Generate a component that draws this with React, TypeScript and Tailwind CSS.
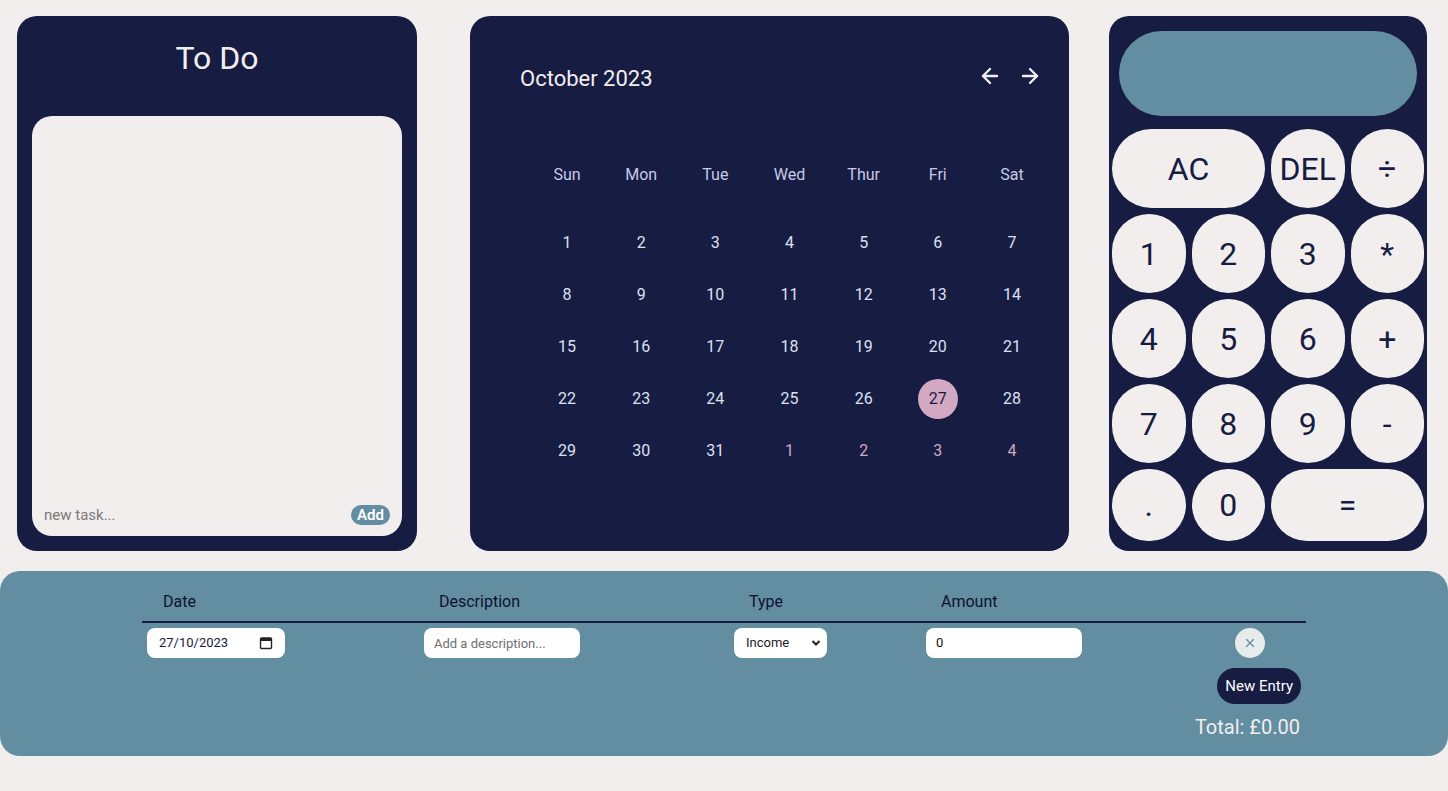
import { FiArrowLeft, FiArrowRight, FiX } from "react-icons/fi";

const days = ["Sun", "Mon", "Tue", "Wed", "Thur", "Fri", "Sat"];

const weeks: { n: number; next?: boolean }[][] = [
  [1, 2, 3, 4, 5, 6, 7].map((n) => ({ n })),
  [8, 9, 10, 11, 12, 13, 14].map((n) => ({ n })),
  [15, 16, 17, 18, 19, 20, 21].map((n) => ({ n })),
  [22, 23, 24, 25, 26, 27, 28].map((n) => ({ n })),
  [
    { n: 29 },
    { n: 30 },
    { n: 31 },
    { n: 1, next: true },
    { n: 2, next: true },
    { n: 3, next: true },
    { n: 4, next: true },
  ],
];

const keys = [
  { label: "AC", cls: "col-span-2" },
  { label: "DEL", cls: "" },
  { label: "÷", cls: "text-[26px]" },
  { label: "1", cls: "" },
  { label: "2", cls: "" },
  { label: "3", cls: "" },
  { label: "*", cls: "text-[22px]" },
  { label: "4", cls: "" },
  { label: "5", cls: "" },
  { label: "6", cls: "" },
  { label: "+", cls: "text-[26px]" },
  { label: "7", cls: "" },
  { label: "8", cls: "" },
  { label: "9", cls: "" },
  { label: "-", cls: "text-[26px]" },
  { label: ".", cls: "text-[26px]" },
  { label: "0", cls: "" },
  { label: "=", cls: "col-span-2 text-[26px]" },
];

const App = () => {
  return (
    <div
      className="min-h-[791px] w-full bg-[#f3eeee] pt-[16px]"
      style={{ fontFamily: "Roboto, 'Liberation Sans', sans-serif" }}
    >
      {/* Top Row */}
      <div className="flex h-[535px] px-[17px] gap-[53px]">
        {/* To Do */}
        <div className="w-[400px] rounded-[20px] bg-[#161c42] flex flex-col px-[15px] pb-[15px]">
          <h1 className="text-center text-[32px] text-[#f3eeee] pt-[21px] h-[100px] leading-[42px]">
            To Do
          </h1>
          <div className="flex-1 rounded-[20px] bg-[#f3eeee] flex flex-col justify-end px-[12px] pb-[10px]">
            <div className="flex items-center justify-between">
              <input
                className="bg-transparent outline-none text-[15px] text-[#6b6b6b] placeholder:text-[#7a7a7a] w-[250px]"
                placeholder="new task..."
              />
              <button className="rounded-full bg-[#638da0] text-white font-semibold text-[15px] px-[6px] h-[20px] leading-[20px]">
                Add
              </button>
            </div>
          </div>
        </div>

        {/* Calendar */}
        <div className="w-[599px] rounded-[20px] bg-[#161c42] flex flex-col">
          <div className="flex justify-between items-center pl-[50px] pr-[27px] pt-[49px]">
            <h2 className="text-[22px] text-[#f3eeee] leading-[28px]">October 2023</h2>
            <div className="flex gap-[16px] text-[#f3eeee] -mt-[7px]">
              <FiArrowLeft size={24} strokeWidth={2.4} />
              <FiArrowRight size={24} strokeWidth={2.4} />
            </div>
          </div>
          <div className="grid grid-cols-7 w-[519px] ml-[60px] mt-[72px] text-[16px] text-center">
            {days.map((d) => (
              <div key={d} className="text-[#c7cbe6] h-[20px] leading-[20px]">
                {d}
              </div>
            ))}
          </div>
          <div className="flex flex-col w-[519px] ml-[60px] mt-[32px]">
            {weeks.map((w, i) => (
              <div key={i} className="grid grid-cols-7 h-[52px] items-center text-[16px]">
                {w.map((d, j) => (
                  <div key={j} className="flex justify-center">
                    {d.n === 27 && !d.next ? (
                      <span className="w-[40px] h-[40px] rounded-full bg-[#d3a8c2] text-[#161c42] flex items-center justify-center">
                        {d.n}
                      </span>
                    ) : (
                      <span className={d.next ? "text-[#d3a8c2]" : "text-[#dde0f2]"}>{d.n}</span>
                    )}
                  </div>
                ))}
              </div>
            ))}
          </div>
        </div>

        {/* Calculator */}
        <div className="w-[318px] ml-[-13px] rounded-[20px] bg-[#161c42] flex flex-col px-[3px] pt-[15px]">
          <div className="mx-[7px] h-[85px] rounded-full bg-[#638da0]"></div>
          <div className="grid grid-cols-4 gap-[6px] mt-[13px] grid-rows-[79px_79px_79px_79px_72px]">
            {keys.map((k) => (
              <button
                key={k.label}
                className={`rounded-full bg-[#f3eeee] text-[#161c42] text-[32px] flex items-center justify-center ${k.cls}`}
              >
                {k.label}
              </button>
            ))}
          </div>
        </div>
      </div>

      {/* Budget Table */}
      <div className="mt-[20px] h-[185px] rounded-[20px] bg-[#638da0] pt-[20px]">
        <div className="w-[1164px] ml-[142px] flex flex-col">
          {/* Headers */}
          <div className="grid grid-cols-[277px_310px_192px_310px_75px] text-[16px] text-[#0e1230] border-b-2 border-[#161c42] h-[32px]">
            <div className="pl-[21px] leading-[22px]">Date</div>
            <div className="pl-[20px] leading-[22px]">Description</div>
            <div className="pl-[20px] leading-[22px]">Type</div>
            <div className="pl-[20px] leading-[22px]">Amount</div>
            <div></div>
          </div>
          {/* Row */}
          <div className="grid grid-cols-[277px_310px_192px_174px_211px] pt-[5px] text-[13px]">
            <div className="pl-[5px]">
              <div className="w-[138px] h-[30px] bg-white rounded-[8px] flex items-center justify-between px-[12px] text-[#161c42]">
                <span>27/10/2023</span>
                <svg width="14" height="14" viewBox="0 0 14 14" fill="none">
                  <rect x="1.5" y="2" width="11" height="10.5" rx="1.2" stroke="#222" strokeWidth="1.4" />
                  <rect x="1.5" y="2" width="11" height="3" fill="#222" />
                </svg>
              </div>
            </div>
            <div className="pl-[5px]">
              <input
                className="w-[156px] h-[30px] bg-white rounded-[8px] px-[10px] outline-none text-[13px] placeholder:text-[#6f6f6f]"
                placeholder="Add a description..."
              />
            </div>
            <div className="pl-[5px]">
              <div className="w-[93px] h-[30px] bg-white rounded-[8px] flex items-center justify-between pl-[12px] pr-[6px] text-[#222]">
                <span>Income</span>
                <svg width="10" height="8" viewBox="0 0 10 8">
                  <path d="M1.5 2 L5 5.5 L8.5 2" stroke="#222" strokeWidth="2" fill="none" />
                </svg>
              </div>
            </div>
            <div className="pl-[5px]">
              <div className="w-[156px] h-[30px] bg-white rounded-[8px] flex items-center px-[10px] text-[#111]">
                0
              </div>
            </div>
            <div className="flex flex-col items-end">
              <div className="mr-[41px] w-[30px] h-[30px] rounded-full bg-[#e7ebec] flex items-center justify-center text-[#638da0]">
                <FiX size={14} />
              </div>
              <button className="mt-[10px] mr-[5px] h-[36px] px-[8px] rounded-full bg-[#161c42] text-white text-[15px]">
                New Entry
              </button>
              <div className="mt-[10px] mr-[6px] text-[20px] text-[#f3eeee] leading-[26px]">Total: £0.00</div>
            </div>
          </div>
        </div>
      </div>
    </div>
  );
};

export default App;
